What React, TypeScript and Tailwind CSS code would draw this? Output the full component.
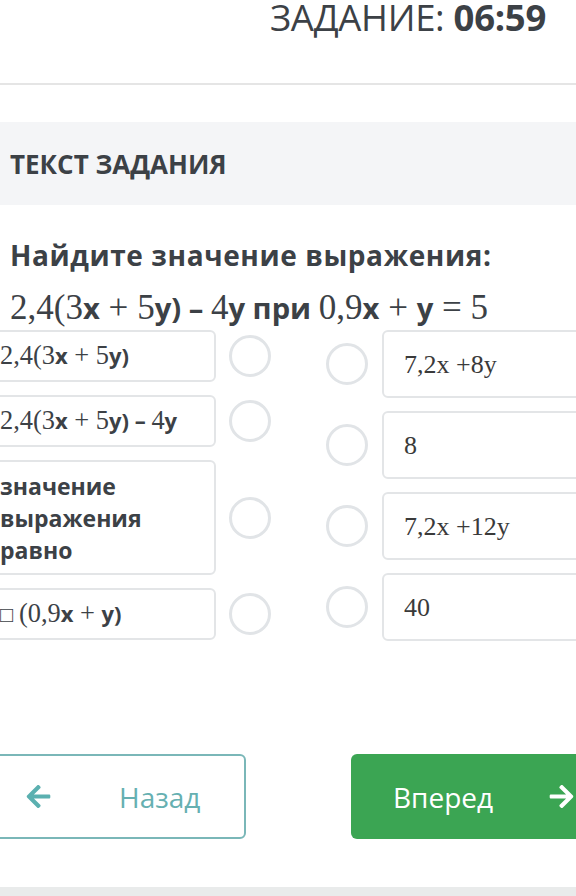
import { FaArrowLeft, FaArrowRight } from "react-icons/fa";

const sans = { fontFamily: '"Open Sans", "Noto Sans", sans-serif' };

function Radio() {
  return <div className="size-[42px] shrink-0 rounded-full border-[3px] border-[#e1e4e7] bg-white" />;
}

// serif math fragment, katex-like scale
function M({ children }: { children: React.ReactNode }) {
  return <span className="text-[1.2em] font-normal [font-family:'Liberation_Serif',serif]">{children}</span>;
}

// binary operator with katex spacing
function Op({ c }: { c: string }) {
  return <span className="mx-[0.25em] text-[1.2em] font-normal [font-family:'Liberation_Serif',serif]">{c}</span>;
}

function B({ children }: { children: React.ReactNode }) {
  return <span className="font-bold">{children}</span>;
}

const leftRows = [
  {
    h: "h-[52px]",
    content: (
      <>
        <M>2,4(3</M>
        <B>x</B>
        <Op c="+" />
        <M>5</M>
        <B>y)</B>
      </>
    ),
  },
  {
    h: "h-[52px]",
    content: (
      <>
        <M>2,4(3</M>
        <B>x</B>
        <Op c="+" />
        <M>5</M>
        <B>y) – </B>
        <M>4</M>
        <B>y</B>
      </>
    ),
  },
  {
    h: "h-[115px]",
    content: (
      <span className="block text-[23px] font-bold leading-[32px]">
        значение
        <br />
        выражения
        <br />
        равно
      </span>
    ),
  },
  {
    h: "h-[52px]",
    content: (
      <>
        <B>□ </B>
        <M>(0,9</M>
        <B>x</B>
        <Op c="+" />
        <B>y)</B>
      </>
    ),
  },
];

const rightRows = ["7,2x +8y", "8", "7,2x +12y", "40"];

export default function App() {
  return (
    <div className="relative h-[896px] w-[576px] overflow-hidden bg-white text-[#3c4146]" style={sans}>
      <header className="flex h-[85px] justify-end border-b-2 border-[#e5e5e5] pr-[30px]">
        <div className="text-[36.5px] leading-[34px] tracking-[-0.3px]">
          ЗАДАНИЕ: <span className="font-bold">06:59</span>
        </div>
      </header>

      <div className="mt-[37px] flex h-[83px] items-center bg-[#f4f5f7] pl-[10px]">
        <h2 className="text-[26px] font-bold leading-none">ТЕКСТ ЗАДАНИЯ</h2>
      </div>

      <p className="mt-[31px] pl-[10px] text-[28px] font-bold leading-[38px] tracking-[0.6px]">
        Найдите значение выражения:
      </p>
      <p className="mt-[15px] h-[38px] whitespace-nowrap pl-[10px] text-[29.2px] leading-[38px]">
        <M>2,4(3</M>
        <B>x</B>
        <Op c="+" />
        <M>5</M>
        <B>y) – </B>
        <M>4</M>
        <B>y при </B>
        <M>0,9</M>
        <B>x</B>
        <Op c="+" />
        <B>y</B>
        <Op c="=" />
        <M>5</M>
      </p>

      <div className="mt-[3px] flex">
        <div className="ml-[-16px] flex shrink-0 flex-col gap-[13px]">
          {leftRows.map((r, i) => (
            <div key={i} className="flex items-center gap-[13px]">
              <div
                className={`flex w-[232px] items-center rounded-[6px] border-2 border-[#e3e5e7] pl-[14px] text-[22px] ${r.h}`}
              >
                <div className="whitespace-nowrap">{r.content}</div>
              </div>
              <Radio />
            </div>
          ))}
        </div>

        <div className="ml-[55px] flex shrink-0 flex-col gap-[13px]">
          {rightRows.map((t) => (
            <div key={t} className="flex items-center gap-[14px]">
              <Radio />
              <div className="flex h-[68px] w-[230px] items-center rounded-[6px] border-2 border-[#e3e5e7] pl-[20px] text-[26px] text-[#3a3a3a] [font-family:'Liberation_Serif',serif]">
                {t}
              </div>
            </div>
          ))}
        </div>
      </div>

      <div className="mt-[113px] flex">
        <button className="ml-[-20px] flex h-[85px] w-[266px] shrink-0 items-center rounded-[6px] border-2 border-[#7ab7b8] text-[#66b0b1]">
          <FaArrowLeft className="ml-[43px] size-[27px] text-[#5bb0b0]" />
          <span className="ml-[67px] text-[28px]">Назад</span>
        </button>
        <button className="ml-[105px] flex h-[85px] w-[250px] shrink-0 items-center rounded-[6px] bg-[#3ba553] text-white">
          <span className="ml-[42px] text-[28px]">Вперед</span>
          <FaArrowRight className="ml-[55px] size-[27px]" />
        </button>
      </div>

      <div className="absolute bottom-0 left-0 h-[9px] w-full bg-[#e9ebeb]" />
    </div>
  );
}
